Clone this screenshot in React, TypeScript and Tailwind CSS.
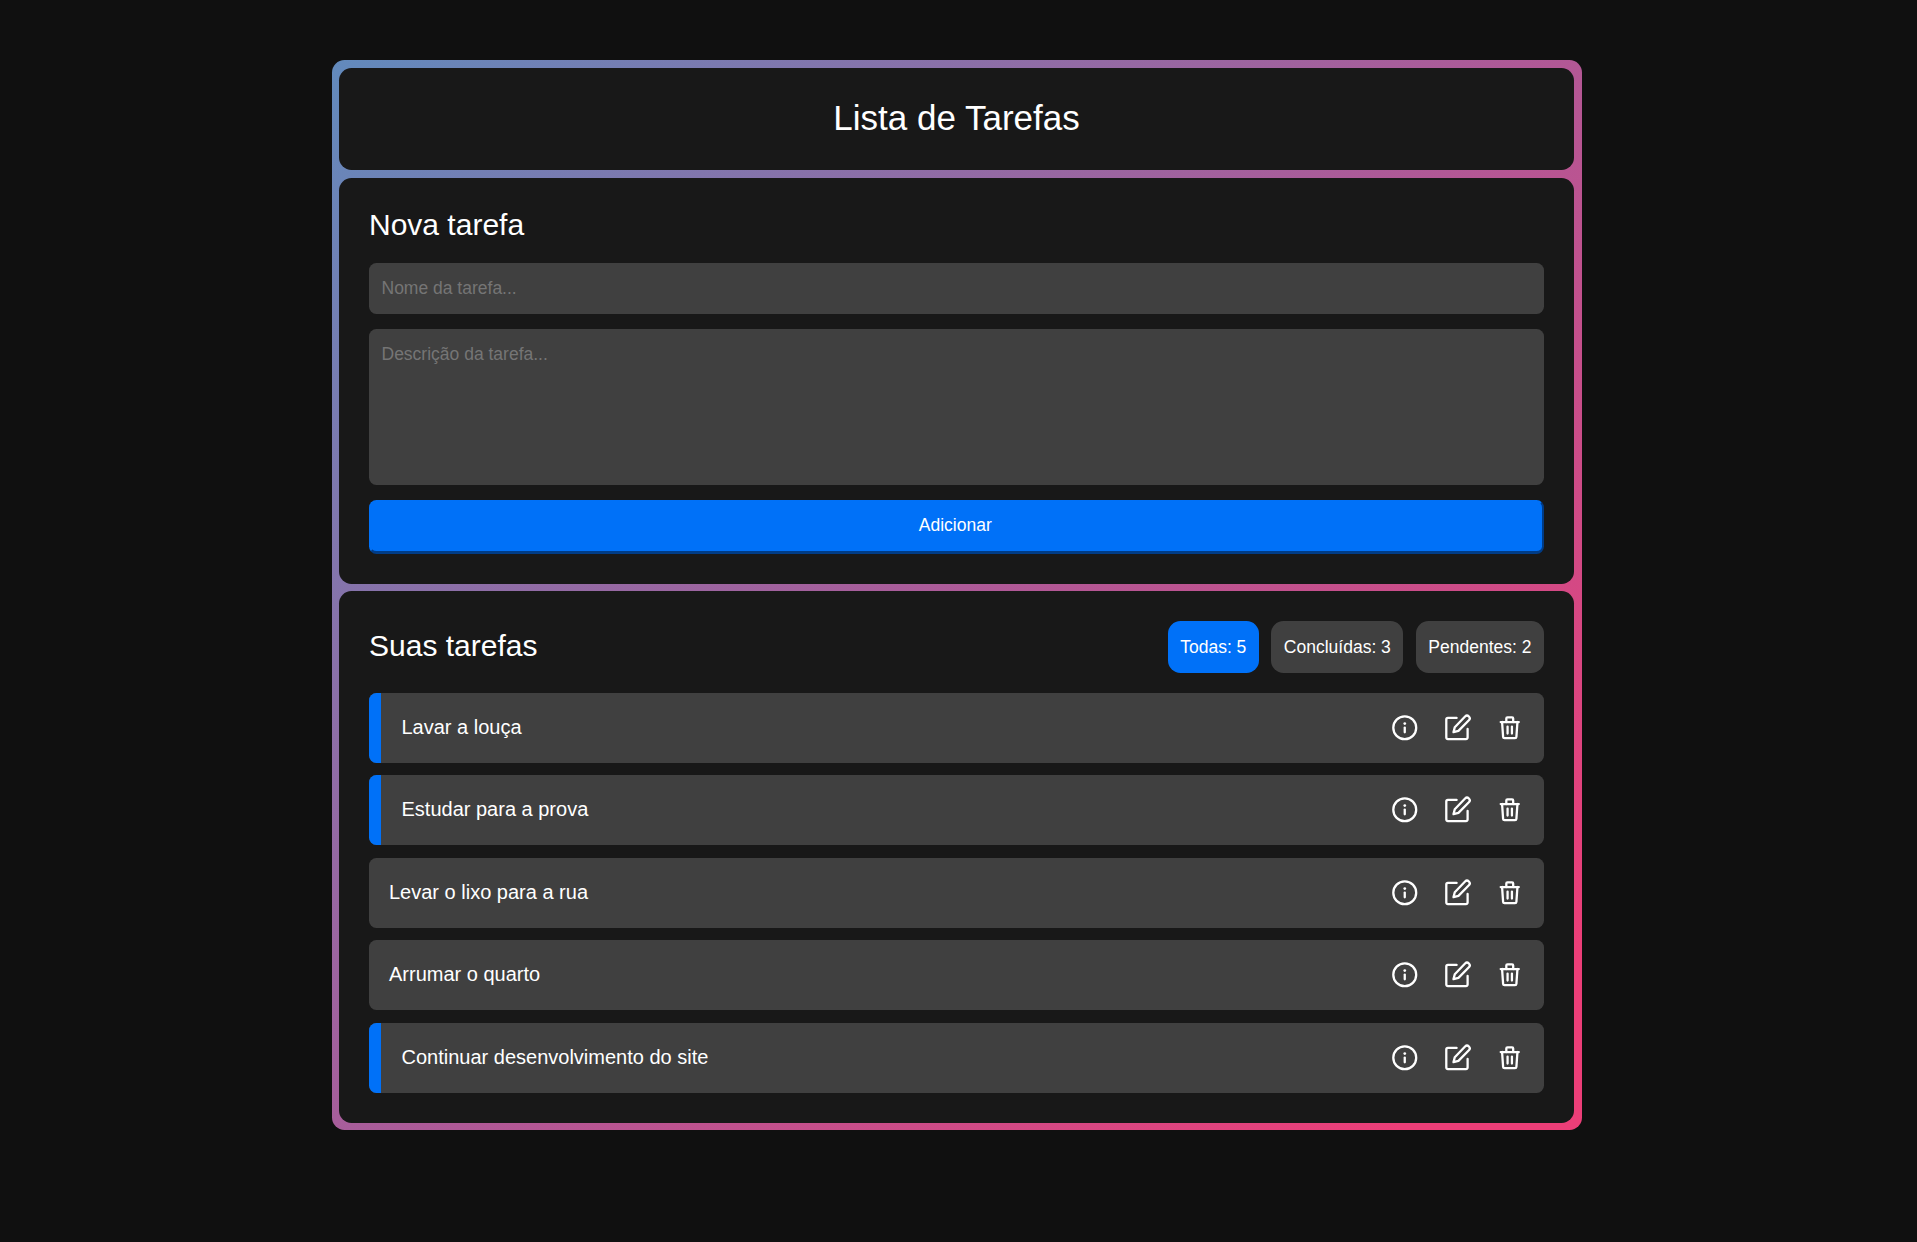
import React from "react";

type Task = { name: string; done: boolean };

const tasks: Task[] = [
  { name: "Lavar a louça", done: true },
  { name: "Estudar para a prova", done: true },
  { name: "Levar o lixo para a rua", done: false },
  { name: "Arrumar o quarto", done: false },
  { name: "Continuar desenvolvimento do site", done: true },
];

function Icon({ children }: { children: React.ReactNode }) {
  return (
    <svg
      className="h-[27.5px] w-[27.5px]"
      viewBox="0 0 24 24"
      fill="none"
      stroke="currentColor"
      strokeWidth="2"
      strokeLinecap="round"
      strokeLinejoin="round"
    >
      {children}
    </svg>
  );
}

function InfoIcon() {
  return (
    <Icon>
      <circle cx="12" cy="12" r="10" />
      <path d="M12 11.8v4.2" />
      <path d="M12 8.3v.05" strokeWidth="2.4" />
    </Icon>
  );
}

function EditIcon() {
  return (
    <Icon>
      <path d="M11 3.4H3.4A1.4 1.4 0 0 0 2 4.8v15.8A1.4 1.4 0 0 0 3.4 22h15.8a1.4 1.4 0 0 0 1.4-1.4V13" />
      <path d="M18.4 2.2a2.3 2.3 0 0 1 3.3 3.3L12.6 14.7l-4.3 1.1 1.1-4.3z" />
    </Icon>
  );
}

function TrashIcon() {
  return (
    <Icon>
      <path d="M4.1 7h15.8" />
      <path d="M5.3 7l.9 13a1.2 1.2 0 0 0 1.2 1.1h9.2a1.2 1.2 0 0 0 1.2-1.1L18.7 7" />
      <path d="M9 7V4a1 1 0 0 1 1-1h4a1 1 0 0 1 1 1v3" />
      <path d="M10.1 11v6M13.9 11v6" />
    </Icon>
  );
}

function TaskRow({ task }: { task: Task }) {
  return (
    <li className="flex h-[70px] overflow-hidden rounded-[7.5px] bg-[#404040]">
      {task.done && <span className="mr-[0.5px] w-[12px] shrink-0 bg-[#0071f8]" />}
      <div className="flex flex-1 items-center justify-between px-5">
        <span className="-mt-[0.5px] text-[20px] leading-[23px]">{task.name}</span>
        <div className="mr-[0.25px] flex items-center gap-[25px]">
          <InfoIcon />
          <EditIcon />
          <TrashIcon />
        </div>
      </div>
    </li>
  );
}

export default function App() {
  return (
    <div className="min-h-[1242px] w-full bg-[#101010] pt-[60px] font-['Liberation_Sans',Arial,sans-serif] text-white">
      <main className="ml-[331.5px] flex h-[1070px] w-[1250px] flex-col gap-[7.5px] rounded-[12.5px] bg-[linear-gradient(135deg,#628abc,#ad5a98_50%,#ec3e78_92%)] p-[7.5px]">
        <header className="flex h-[102.5px] shrink-0 items-center justify-center rounded-[12.5px] bg-[#181818]">
          <h1 className="-mt-[2px] text-[35px] leading-[40px]">Lista de Tarefas</h1>
        </header>

        <section className="flex h-[406.25px] shrink-0 flex-col rounded-[12.5px] bg-[#181818] p-[30px]">
          <h2 className="h-[55px] shrink-0 text-[30px] leading-[34px]">Nova tarefa</h2>
          <input
            className="h-[51.25px] shrink-0 rounded-[7.5px] bg-[#404040] px-[12.5px] text-[17.5px] placeholder:text-[#757575]"
            placeholder="Nome da tarefa..."
          />
          <textarea
            className="mt-[15px] h-[156.25px] shrink-0 resize-none rounded-[7.5px] bg-[#404040] px-[12.5px] py-[15px] text-[17.5px] leading-[20px] placeholder:text-[#757575]"
            placeholder="Descrição da tarefa..."
          />
          <button className="mt-[15px] h-[53.75px] shrink-0 rounded-[7.5px] border-2 border-b-[3px] border-t-[#0071f8] border-r-[#003c87] border-b-[#003c87] border-l-[#0071f8] bg-[#0071f8] pr-[2.5px] pb-[2.5px] text-[17.5px]">
            Adicionar
          </button>
        </section>

        <section className="flex flex-1 flex-col rounded-[12.5px] bg-[#181818] px-[30px] pt-[30px]">
          <div className="flex h-[51.25px] items-center justify-between">
            <h2 className="-mt-[2px] text-[30px] leading-[34px]">Suas tarefas</h2>
            <div className="flex gap-[12.5px] text-[17.5px] leading-[20px]">
              <span className="flex h-[51.25px] items-center rounded-[12.5px] bg-[#0071f8] px-[12.5px]">Todas: 5</span>
              <span className="flex h-[51.25px] items-center rounded-[12.5px] bg-[#404040] px-[12.5px]">Concluídas: 3</span>
              <span className="flex h-[51.25px] items-center rounded-[12.5px] bg-[#404040] px-[12.5px]">Pendentes: 2</span>
            </div>
          </div>
          <ul className="mt-5 flex flex-col gap-[12.5px]">
            {tasks.map((task) => (
              <TaskRow key={task.name} task={task} />
            ))}
          </ul>
        </section>
      </main>
    </div>
  );
}
